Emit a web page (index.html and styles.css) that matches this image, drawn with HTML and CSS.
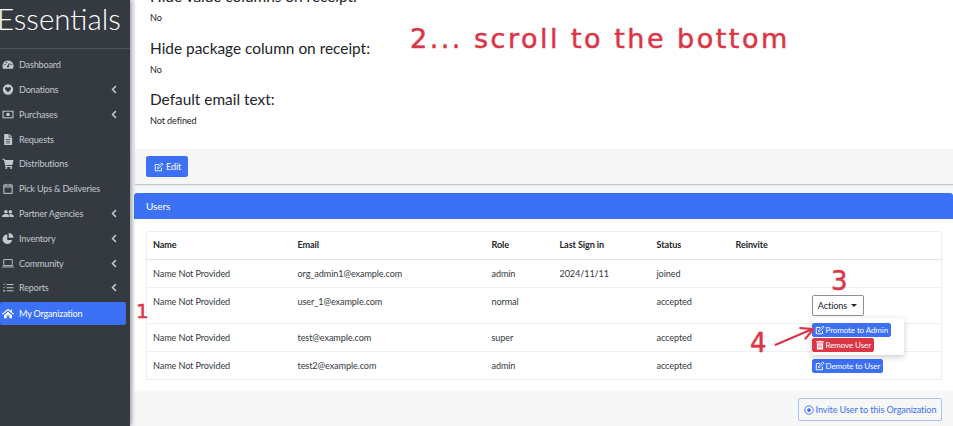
FILE: index.html
```html
<!DOCTYPE html>
<html lang="en">
<head>
<meta charset="utf-8">
<title>My Organization</title>
<link rel="stylesheet" href="styles.css">
</head>
<body>
<svg class="defs" width="0" height="0" aria-hidden="true">
  <symbol id="i-edit" viewBox="0 0 16 16"><path d="M12 9.5V14H2V4h6" fill="none" stroke="currentColor" stroke-width="1.5"/><path d="M6 8l6.5-6.5 2 2L8 10l-2.500.500z" fill="none" stroke="currentColor" stroke-width="1.300"/></symbol>
  <symbol id="i-trash" viewBox="0 0 16 16"><path d="M2 2h4l.5-1h3l.5 1h4v2H2zM3 5h10v10H3z" fill="currentColor"/><path d="M6 7v6M8 7v6M10 7v6" stroke="#dc3545" stroke-width=".8"/></symbol>
  <symbol id="i-left" viewBox="0 0 8 12"><path d="M6.500 1.500L2 6l4.500 4.500" fill="none" stroke="currentColor" stroke-width="2"/></symbol>
  <symbol id="i-circle" viewBox="0 0 16 16"><circle cx="8" cy="8" r="6.800" fill="none" stroke="currentColor" stroke-width="1.400"/><circle cx="8" cy="8" r="3" fill="currentColor"/></symbol>
  <symbol id="i-dash" viewBox="0 0 16 16"><path d="M8 2a8 8 0 0 0-8 8c0 1.500.400 2.800 1 4h14c.6-1.200 1-2.500 1-4a8 8 0 0 0-8-8z" fill="currentColor"/><path d="M8 11l2-5" stroke="#343a40" stroke-width="1.500"/><circle cx="8" cy="11" r="1.500" fill="#343a40"/><circle cx="3.500" cy="8" r="1" fill="#343a40"/><circle cx="12.500" cy="8" r="1" fill="#343a40"/><circle cx="6" cy="5" r="1" fill="#343a40"/></symbol>
  <symbol id="i-heart" viewBox="0 0 16 16"><circle cx="8" cy="8" r="7.500" fill="currentColor"/><path d="M8 12L4.300 8.200a2.200 2.200 0 0 1 3.100-3.100l.6.600.6-.6a2.200 2.200 0 0 1 3.100 3.100z" fill="#343a40"/></symbol>
  <symbol id="i-money" viewBox="0 0 16 16"><rect x=".7" y="3.200" width="14.600" height="9.600" fill="none" stroke="currentColor" stroke-width="1.400"/><circle cx="8" cy="8" r="2.600" fill="currentColor"/><path d="M1 5.500L3 3.500M1 10.500l2 2M15 5.500l-2-2M15 10.500l-2 2" stroke="currentColor"/></symbol>
  <symbol id="i-file" viewBox="0 0 16 16"><path d="M2.500 0H9v5h5v11H2.500z" fill="currentColor"/><path d="M10 0l4 4h-4z" fill="currentColor"/><path d="M5 8h6M5 10.500h6M5 13h6" stroke="#343a40"/></symbol>
  <symbol id="i-cart" viewBox="0 0 16 16"><path d="M0 1h3l.7 2H16l-1.500 7H5.500l.4 1.500H14V13H4.500L2 2.500H0z" fill="currentColor"/><circle cx="5.500" cy="14.500" r="1.500" fill="currentColor"/><circle cx="12.500" cy="14.500" r="1.500" fill="currentColor"/></symbol>
  <symbol id="i-cal" viewBox="0 0 16 16"><rect x="2" y="3" width="12" height="12" fill="none" stroke="currentColor" stroke-width="1.500"/><path d="M2 5h12v1.500H2zM4.500 1h1.500v3H4.500zM10 1h1.500v3H10z" fill="currentColor"/></symbol>
  <symbol id="i-users" viewBox="0 0 20 16"><circle cx="6.500" cy="5" r="3" fill="currentColor"/><circle cx="14" cy="5" r="3" fill="currentColor"/><path d="M0 14c0-3 2.500-5 6.500-5s6 2 6 5zM13.500 14c0-2-.7-3.700-2-4.700 3.500-1 8.500.5 8.500 4.700z" fill="currentColor"/></symbol>
  <symbol id="i-pie" viewBox="0 0 16 16"><path d="M7 2a7 7 0 1 0 7 8H7z" fill="currentColor"/><path d="M9 0a7 7 0 0 1 7 7H9z" fill="currentColor"/></symbol>
  <symbol id="i-laptop" viewBox="0 0 20 16"><rect x="3" y="1.500" width="14" height="10" fill="none" stroke="currentColor" stroke-width="1.500"/><path d="M0 13h20v1.500H0z" fill="currentColor"/></symbol>
  <symbol id="i-tasks" viewBox="0 0 16 16"><path d="M6 3h10v1.500H6zM6 7.500h10V9H6zM6 12h10v1.500H6z" fill="currentColor"/><path d="M1 3l1 1 2-2M1 7.500l1 1 2-2" fill="none" stroke="currentColor"/><circle cx="2.300" cy="12.700" r="1.300" fill="currentColor"/></symbol>
  <symbol id="i-home" viewBox="0 0 18 16"><path d="M9 1L0 8.500l1 1.200L9 3l8 6.700 1-1.200-3-2.500V2h-2v2.400z" fill="currentColor"/><path d="M3 10.500L9 5.500l6 5V15h-4v-4H7v4H3z" fill="currentColor"/></symbol>
</svg>

<div class="layout">
  <aside class="sidebar">
    <div class="brand">Essentials</div>
    <nav class="menu">
      <a class="item"><svg class="ico"><use href="#i-dash"/></svg><span class="label">Dashboard</span></a>
      <a class="item"><svg class="ico"><use href="#i-heart"/></svg><span class="label">Donations</span><svg class="chev"><use href="#i-left"/></svg></a>
      <a class="item"><svg class="ico"><use href="#i-money"/></svg><span class="label">Purchases</span><svg class="chev"><use href="#i-left"/></svg></a>
      <a class="item"><svg class="ico"><use href="#i-file"/></svg><span class="label">Requests</span></a>
      <a class="item"><svg class="ico"><use href="#i-cart"/></svg><span class="label">Distributions</span></a>
      <a class="item"><svg class="ico"><use href="#i-cal"/></svg><span class="label">Pick Ups &amp; Deliveries</span></a>
      <a class="item"><svg class="ico"><use href="#i-users"/></svg><span class="label">Partner Agencies</span><svg class="chev"><use href="#i-left"/></svg></a>
      <a class="item"><svg class="ico"><use href="#i-pie"/></svg><span class="label">Inventory</span><svg class="chev"><use href="#i-left"/></svg></a>
      <a class="item"><svg class="ico"><use href="#i-laptop"/></svg><span class="label">Community</span><svg class="chev"><use href="#i-left"/></svg></a>
      <a class="item"><svg class="ico"><use href="#i-tasks"/></svg><span class="label">Reports</span><svg class="chev"><use href="#i-left"/></svg></a>
      <a class="item active"><svg class="ico"><use href="#i-home"/></svg><span class="label">My Organization</span></a>
    </nav>
  </aside>

  <main class="main">
    <section class="card org">
      <div class="org-body">
        <div class="field"><h4>Hide value columns on receipt:</h4><p>No</p></div>
        <div class="field"><h4>Hide package column on receipt:</h4><p>No</p></div>
        <div class="field"><h4>Default email text:</h4><p>Not defined</p></div>
      </div>
      <div class="org-foot"><a class="btn btn-blue btn-edit"><svg class="bi"><use href="#i-edit"/></svg>Edit</a></div>
    </section>

    <section class="card users">
      <header class="users-head">Users</header>
      <div class="users-body">
        <table class="tbl">
          <colgroup><col class="c1"><col class="c2"><col class="c3"><col class="c4"><col class="c5"><col class="c6"><col></colgroup>
          <thead><tr><th>Name</th><th>Email</th><th>Role</th><th>Last Sign in</th><th>Status</th><th>Reinvite</th><th></th></tr></thead>
          <tbody>
            <tr><td>Name Not Provided</td><td>org_admin1@example.com</td><td>admin</td><td>2024/11/11</td><td>joined</td><td></td><td></td></tr>
            <tr class="tall"><td>Name Not Provided</td><td>user_1@example.com</td><td>normal</td><td></td><td>accepted</td><td></td>
              <td class="act">
                <a class="btn-actions">Actions<span class="caret"></span></a>
                <div class="dropdown">
                  <a class="btn btn-blue btn-xs"><svg class="bi"><use href="#i-edit"/></svg>Promote to Admin</a>
                  <a class="btn btn-red btn-xs"><svg class="bi"><use href="#i-trash"/></svg>Remove User</a>
                </div>
              </td></tr>
            <tr><td>Name Not Provided</td><td>test@example.com</td><td>super</td><td></td><td>accepted</td><td></td><td></td></tr>
            <tr><td>Name Not Provided</td><td>test2@example.com</td><td>admin</td><td></td><td>accepted</td><td></td><td class="act"><a class="btn btn-blue btn-xs"><svg class="bi"><use href="#i-edit"/></svg>Demote to User</a></td></tr>
          </tbody>
        </table>
      </div>
      <footer class="users-foot"><a class="btn-invite"><svg class="bi"><use href="#i-circle"/></svg>Invite User to this Organization</a></footer>
    </section>
  </main>
</div>

<div class="note note-2">2... scroll to the bottom</div>
<div class="note note-1">1</div>
<div class="note note-3">3</div>
<div class="note note-4">4</div>
<svg class="arrow" viewBox="0 0 48 24" aria-hidden="true"><path d="M2 22L44 4M30 3l15 1-9 11" fill="none" stroke="#dc3545" stroke-width="2.500" stroke-linecap="round" stroke-linejoin="round"/></svg>
</body>
</html>
```
FILE: styles.css
```css
* { box-sizing: border-box; }
html, body { margin: 0; padding: 0; width: 953px; height: 426px; overflow: hidden; }
body { font-family: Lato, "Noto Sans", sans-serif; font-size: 9.100px; letter-spacing: -.1px; color: #212529; background: #f4f6f9; position: relative; }
.defs { position: absolute; }
.layout { display: flex; width: 953px; height: 426px; overflow: hidden; }

.sidebar { flex: 0 0 130px; min-width: 0; background: #343a40; color: #c2c7d0; box-shadow: 1px 0 5px rgba(0,0,0,.45); position: relative; z-index: 2; }
.brand { height: 49px; margin-left: -3px; padding-top: 0; font-family: Lato, sans-serif; font-weight: 300; font-size: 29.500px; letter-spacing: 0; line-height: 38px; color: #fff; border-bottom: 1px solid #4b545c; white-space: nowrap; }
.menu { display: flex; flex-direction: column; padding-top: 3.400px; }
.item { height: 24.800px; display: flex; align-items: center; padding: 0 9px 0 2px; width: 126px; color: #c2c7d0; letter-spacing: -.2px; }
.ico { width: 12px; height: 11px; flex: none; margin-right: 5px; color: #c2c7d0; }
.label { flex: 1; white-space: nowrap; }
.chev { width: 6px; height: 9px; color: #c2c7d0; flex: none; }
.item.active { background: #3c70f5; color: #fff; border-radius: 2px; height: 23px; margin-top: 1.600px; }
.item.active .ico { color: #fff; }

.main { flex: 1; min-width: 0; margin-top: -27px; padding-left: 4px; display: flex; flex-direction: column; gap: 9px; }
.card { background: #fff; }
.org { margin-left: 1px; box-shadow: 0 1px 1px rgba(0,0,0,.2); }
.org-body { height: 176px; padding: 13px 15px 0; }
.field { height: 51.500px; }
.field h4 { margin: 0 0 4px; font-size: 15.400px; font-weight: 400; letter-spacing: 0; line-height: 21px; color: #212529; }
.field p { margin: 0; line-height: 13px; }
.org-foot { height: 35px; padding: 6px 11px; background: #f7f7f7; border-top: 1px solid #f2f2f2; }

.btn { display: inline-flex; align-items: center; color: #fff; white-space: nowrap; }
.bi { width: 10px; height: 10px; flex: none; margin-right: 2px; }
.btn-blue { background: #3c70f5; border: 1px solid #3c70f5; }
.btn-red { background: #dc3545; border: 1px solid #dc3545; }
.btn-edit { width: 42px; height: 21px; padding: 0 7px; border-radius: 2px; }
.btn-xs { height: 14px; padding: 0 2px; border-radius: 2px; font-size: 8px; letter-spacing: -.1px; }
.btn-xs .bi { margin-right: 1px; }

.users { flex: 1; display: flex; flex-direction: column; }
.users-head { height: 26px; background: #3c70f5; color: #fff; padding: 0 12px; display: flex; align-items: center; border-radius: 3px 3px 0 0; font-size: 10px; }
.users-body { padding: 12px 11px 11px 12px; }
.tbl { width: 796px; table-layout: fixed; border-collapse: collapse; border: 1px solid #eceef0; }
.c1 { width: 145px; } .c2 { width: 194px; } .c3 { width: 68px; } .c4 { width: 97px; } .c5 { width: 79px; } .c6 { width: 76px; }
.tbl th { height: 28px; padding: 0 6px 2px; text-align: left; font-weight: 700; border-bottom: 1.500px solid #e3e6e9; }
.tbl td { height: 28px; padding: 0 6px; border-top: 1px solid #eef0f2; white-space: nowrap; color: #343a40; }
.tall td { height: 36px; padding-bottom: 8px; }
.tall td.act { padding-bottom: 0; }
.act { position: relative; }
.btn-actions { display: inline-flex; align-items: center; justify-content: center; width: 52px; height: 21px; border: 1px solid #8a9096; border-radius: 2px; background: #fff; color: #212529; }
.caret { width: 0; height: 0; margin-left: 4px; border: 3px solid transparent; border-top-color: #212529; border-bottom: 0; }
.dropdown { position: absolute; left: 6px; top: 30px; width: 92px; height: 37px; padding: 5px 0 0; background: #fff; border-radius: 2px; box-shadow: 0 2px 6px rgba(0,0,0,.2); display: flex; flex-direction: column; align-items: flex-start; gap: 1px; z-index: 3; }
.users-foot { flex: 1; background: #f7f7f7; padding: 7px 11px; display: flex; justify-content: flex-end; align-items: flex-start; }
.btn-invite { display: inline-flex; align-items: center; justify-content: center; width: 144px; height: 23px; border: 1px solid #a9c1f9; border-radius: 2px; color: #3c70f5; white-space: nowrap; }

.note { position: absolute; z-index: 5; color: #dc3545; font-family: "DejaVu Sans", sans-serif; white-space: nowrap; letter-spacing: 0; -webkit-text-stroke: .5px #dc3545; }
.note-2 { left: 410px; top: 22px; font-size: 27px; letter-spacing: 2.500px; line-height: 34px; }
.note-1 { left: 136px; top: 298px; font-size: 20px; line-height: 26px; }
.note-3 { left: 831px; top: 267px; font-size: 26px; line-height: 28px; }
.note-4 { left: 750px; top: 329px; font-size: 26px; line-height: 28px; }
.arrow { position: absolute; left: 774px; top: 325px; width: 42px; height: 22px; z-index: 5; }
```
